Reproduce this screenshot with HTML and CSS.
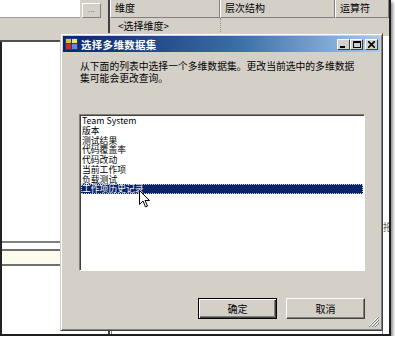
FILE: index.html
```html
<!DOCTYPE html>
<html lang="zh">
<head>
  <meta charset="UTF-8">
  <title>选择多维数据集</title>
  <link rel="stylesheet" href="styles.css">
</head>
<body>

  <div class="shot">
    <div class="app">
      <div class="side">
        <div class="side-top">
          <div class="field"></div>
          <div class="dots">...</div>
        </div>
        <div class="band"></div>
        <div class="panel">
          <div class="line"></div>
          <div class="tip"></div>
        </div>
      </div>

      <div class="grid">
        <div class="head">
          <div class="cell c1">维度</div>
          <div class="cell c2">层次结构</div>
          <div class="cell c3">运算符</div>
        </div>
        <div class="row">
          <div class="cell c1">&lt;选择维度&gt;</div>
          <div class="cell c2 dotted"></div>
          <div class="cell c3"></div>
        </div>
        <div class="below">
          <div class="mark"></div>
          <div class="strip"><span class="drag">拖</span></div>
        </div>
      </div>
    </div>

    <!-- dialog window over the app -->
    <div class="dialog">
      <div class="titlebar">
        <svg class="icon" width="13" height="12" viewBox="0 0 13 12">
          <rect x="0" y="0" width="13" height="12" fill="#1c3a8a"/>
          <rect x="1" y="1" width="5" height="4" fill="#e8c020"/>
          <rect x="7" y="1" width="5" height="4" fill="#f4e070"/>
          <rect x="1" y="6" width="5" height="5" fill="#c83020"/>
          <rect x="7" y="6" width="5" height="5" fill="#5c8ad8"/>
        </svg>
        <span class="title">选择多维数据集</span>
        <div class="tbtns">
          <span class="tbtn"><svg width="7" height="7" viewBox="0 0 7 7"><rect x="0" y="5" width="5" height="2" fill="#000"/></svg></span>
          <span class="tbtn"><svg width="8" height="7" viewBox="0 0 8 7"><rect x="0.5" y="0.5" width="7" height="6" fill="none" stroke="#000"/><rect x="0" y="0" width="8" height="2" fill="#000"/></svg></span>
          <span class="tbtn gap"><svg width="7" height="7" viewBox="0 0 7 7"><path d="M0 0L7 7M7 0L0 7" stroke="#000" stroke-width="1.6"/></svg></span>
        </div>
      </div>

      <div class="body">
        <p class="desc">从下面的列表中选择一个多维数据集。更改当前选中的多维数据<br>集可能会更改查询。</p>

        <ul class="list">
          <li>Team System</li>
          <li>版本</li>
          <li>测试结果</li>
          <li>代码覆盖率</li>
          <li>代码改动</li>
          <li>当前工作项</li>
          <li>负载测试</li>
          <li class="sel">工作项历史记录</li>
        </ul>

        <div class="actions">
          <button class="btn default">确定</button>
          <button class="btn">取消</button>
        </div>
      </div>

      <svg class="grip" width="11" height="11" viewBox="0 0 11 11">
        <path d="M10 1L1 10M10 4L4 10M10 7L7 10" stroke="#fff" stroke-width="1"/>
        <path d="M11 1L1 11M11 4L4 11M11 7L7 11" stroke="#808080" stroke-width="1"/>
      </svg>

      <svg class="cursor" width="12" height="18" viewBox="0 0 12 18">
        <path d="M0.5 0.5V14.5L4 11L6.5 17L8.5 16L6 10.5H10.5Z" fill="#fff" stroke="#000"/>
      </svg>
    </div>
  </div>

</body>
</html>
```

FILE: styles.css
```css
body {
  margin: 0;
  background: #fff;
  font-family: "Noto Sans CJK SC", "Noto Sans", sans-serif;
}
.shot {
  position: relative;
  width: 389px;
  height: 334px;
  background: #d4d0c8;
  border-right: 2px solid #1e1e1e;
  border-bottom: 2px solid #1e1e1e;
  box-shadow: 2px 2px 3px rgba(0,0,0,0.45);
  overflow: hidden;
}
.app {
  display: flex;
  height: 100%;
}
.side {
  width: 108px;
  display: flex;
  flex-direction: column;
}
.side-top {
  height: 18px;
  display: flex;
  background: #d4d0c8;
}
.field {
  width: 80px;
  height: 17px;
  background: #fff;
  border-bottom: 1px solid #a0a0a0;
}
.dots {
  width: 17px;
  height: 13px;
  margin: 3px 0 0 2px;
  background: #d4d0c8;
  border: 1px solid #fff;
  border-right-color: #808080;
  border-bottom-color: #808080;
  font-size: 8px;
  line-height: 10px;
  text-align: center;
  color: #808080;
}
.band {
  height: 22px;
  background: #d4d0c8;
  border-bottom: 2px solid #505050;
}
.panel {
  flex: 1;
  background: #fff;
  border-left: 2px solid #222;
  padding-top: 199px;
}
.line {
  height: 2px;
  background: #808080;
}
.tip {
  margin-top: 6px;
  height: 13px;
  background: #fdfaee;
  border-top: 2px solid #707070;
  border-bottom: 2px solid #707070;
}
.grid {
  flex: 1;
  display: flex;
  flex-direction: column;
  border-left: 2px solid #404040;
}
.head, .row {
  display: flex;
  height: 18px;
}
.cell {
  font-size: 10px;
  line-height: 16px;
  padding-left: 4px;
  color: #000;
  box-sizing: border-box;
}
.head .cell {
  border-right: 1px solid #808080;
  border-bottom: 1px solid #808080;
  border-left: 1px solid #fff;
}
.c1 { width: 110px; }
.c2 { width: 115px; }
.c3 { flex: 1; }
.row .c1 {
  padding-left: 8px;
}
.dotted {
  border-left: 1px dotted #909090;
}
.below {
  flex: 1;
  display: flex;
  align-items: flex-end;
  justify-content: space-between;
  background: #fff;
}
.mark {
  width: 1px;
  height: 4px;
  margin-left: 1px;
  background: #808080;
}
.strip {
  align-self: stretch;
  width: 6px;
  background: #fff;
  border-left: 1px solid #909090;
  position: relative;
}
.drag {
  position: absolute;
  left: 0;
  top: 183px;
  font-size: 10px;
  color: #606060;
}
.dialog {
  position: absolute;
  left: 60px;
  top: 33px;
  width: 323px;
  height: 298px;
  box-sizing: border-box;
  background: #d4d0c8;
  border: 1px solid #d4d0c8;
  border-right-color: #404040;
  border-bottom-color: #404040;
  box-shadow: inset 1px 1px 0 #fff, inset -1px -1px 0 #808080;
  padding: 2px;
}
.titlebar {
  height: 16px;
  display: flex;
  align-items: center;
  padding: 0 2px 0 2px;
  background: linear-gradient(to right, #0a246a, #3a6ea5 55%, #a6caf0);
}
.icon {
  margin-right: 3px;
}
.title {
  flex: 1;
  color: #fff;
  font-weight: bold;
  font-size: 10.5px;
  letter-spacing: 0.3px;
}
.tbtns {
  display: flex;
}
.tbtn {
  width: 13px;
  height: 11px;
  box-sizing: border-box;
  background: #d4d0c8;
  border: 1px solid #fff;
  border-right-color: #404040;
  border-bottom-color: #404040;
  display: flex;
  align-items: center;
  justify-content: center;
}
.tbtn.gap {
  margin-left: 2px;
}
.body {
  padding: 8px 0 0 17px;
}
.desc {
  margin: 0;
  font-size: 9.8px;
  line-height: 12px;
  white-space: nowrap;
  color: #000;
}
.list {
  list-style: none;
  margin: 30px 0 0 -1px;
  padding: 1px;
  width: 286px;
  height: 157px;
  box-sizing: border-box;
  background: #fff;
  border: 1px solid #808080;
  border-right-color: #fff;
  border-bottom-color: #fff;
  box-shadow: inset 1px 1px 0 #404040;
}
.list li {
  font-size: 8.8px;
  line-height: 9.75px;
  height: 9.75px;
  padding-left: 1px;
  color: #000;
  white-space: nowrap;
}
.list li.sel {
  background: #0a246a;
  color: #fff;
  outline: 1px dotted #d4d0c8;
  outline-offset: -1px;
}
.actions {
  display: flex;
  gap: 9px;
  margin: 27px 0 0 118px;
}
.btn {
  width: 79px;
  height: 21px;
  padding: 0;
  background: #d4d0c8;
  font-family: "Noto Sans CJK SC", sans-serif;
  font-size: 10px;
  color: #000;
  border: 1px solid #fff;
  border-right-color: #404040;
  border-bottom-color: #404040;
  box-shadow: inset -1px -1px 0 #808080;
}
.btn.default {
  border: 1px solid #000;
  box-shadow: inset 1px 1px 0 #fff, inset -1px -1px 0 #404040, inset -2px -2px 0 #808080;
}
.grip {
  position: absolute;
  right: 3px;
  bottom: 3px;
}
.cursor {
  position: absolute;
  left: 78px;
  top: 156px;
}
```
